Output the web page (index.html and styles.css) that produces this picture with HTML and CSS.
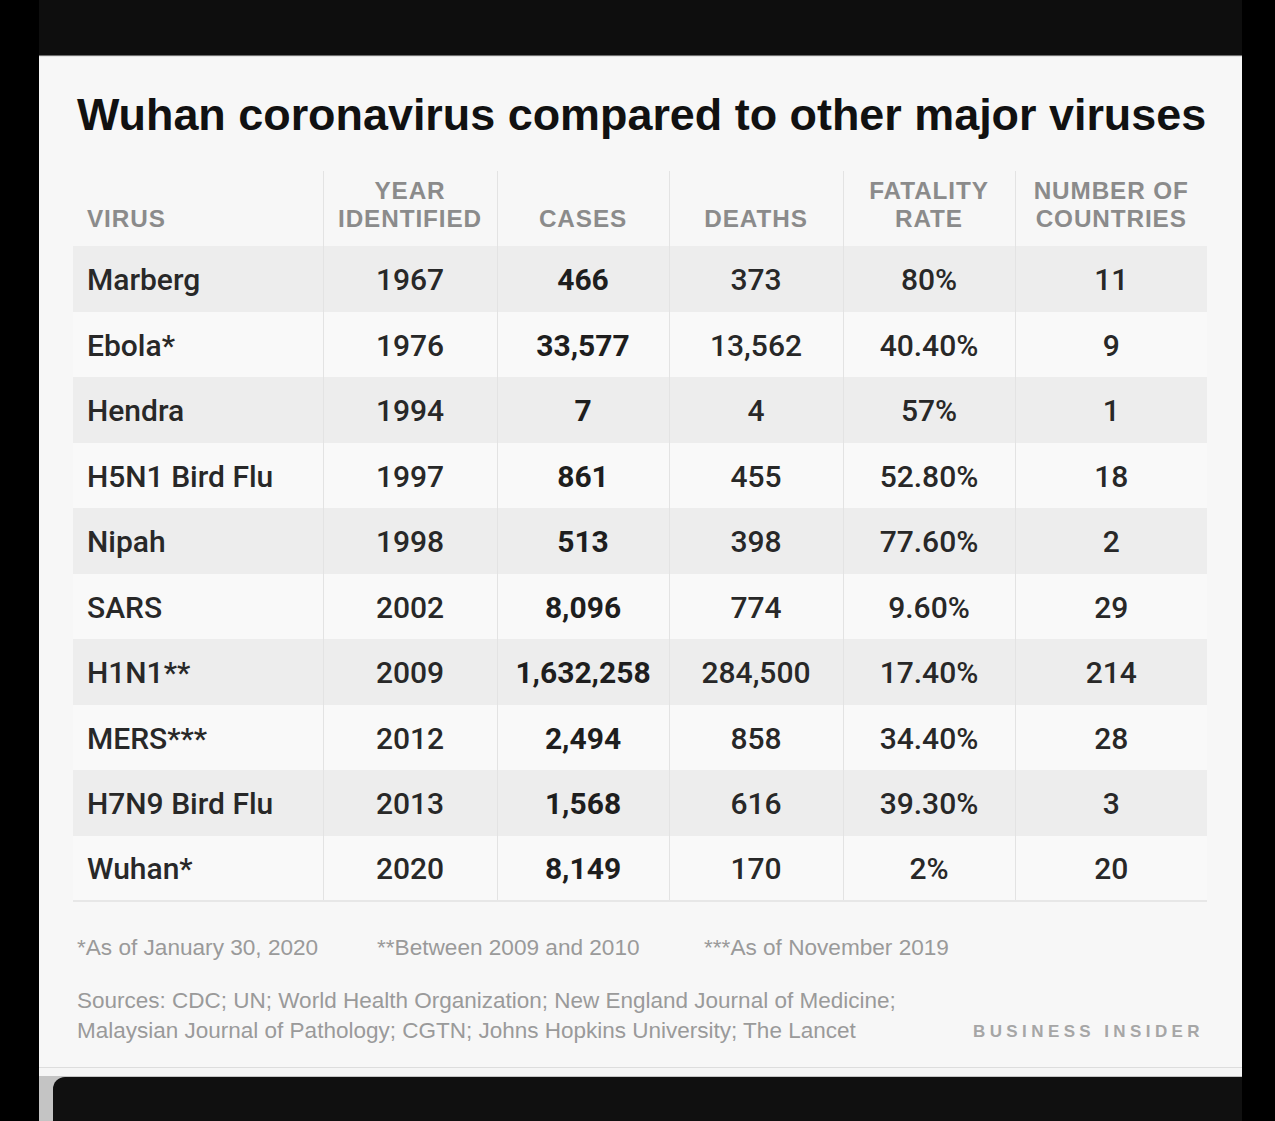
FILE: index.html
```html
<!DOCTYPE html>
<html lang="en">
<head>
<meta charset="utf-8">
<title>Wuhan coronavirus compared to other major viruses</title>
<link rel="stylesheet" href="styles.css">
</head>
<body>
<div class="screen">
  <div class="gutter"></div>
  <div class="column">
    <div class="topbar"></div>
    <div class="panel">
      <h1 class="title">Wuhan coronavirus compared to other major viruses</h1>
      <table class="data">
        <colgroup>
          <col class="w-virus"><col class="w-year"><col class="w-cases"><col class="w-deaths"><col class="w-rate"><col class="w-countries">
        </colgroup>
        <thead>
          <tr>
            <th class="first">VIRUS</th>
            <th>YEAR<br>IDENTIFIED</th>
            <th>CASES</th>
            <th>DEATHS</th>
            <th>FATALITY<br>RATE</th>
            <th>NUMBER OF<br>COUNTRIES</th>
          </tr>
        </thead>
        <tbody>
          <tr class="shade"><td class="first">Marberg</td><td>1967</td><td class="bold">466</td><td>373</td><td>80%</td><td>11</td></tr>
          <tr><td class="first">Ebola*</td><td>1976</td><td class="bold">33,577</td><td>13,562</td><td>40.40%</td><td>9</td></tr>
          <tr class="shade"><td class="first">Hendra</td><td>1994</td><td class="bold">7</td><td>4</td><td>57%</td><td>1</td></tr>
          <tr><td class="first">H5N1 Bird Flu</td><td>1997</td><td class="bold">861</td><td>455</td><td>52.80%</td><td>18</td></tr>
          <tr class="shade"><td class="first">Nipah</td><td>1998</td><td class="bold">513</td><td>398</td><td>77.60%</td><td>2</td></tr>
          <tr><td class="first">SARS</td><td>2002</td><td class="bold">8,096</td><td>774</td><td>9.60%</td><td>29</td></tr>
          <tr class="shade"><td class="first">H1N1**</td><td>2009</td><td class="bold">1,632,258</td><td>284,500</td><td>17.40%</td><td>214</td></tr>
          <tr><td class="first">MERS***</td><td>2012</td><td class="bold">2,494</td><td>858</td><td>34.40%</td><td>28</td></tr>
          <tr class="shade"><td class="first">H7N9 Bird Flu</td><td>2013</td><td class="bold">1,568</td><td>616</td><td>39.30%</td><td>3</td></tr>
          <tr><td class="first">Wuhan*</td><td>2020</td><td class="bold">8,149</td><td>170</td><td>2%</td><td>20</td></tr>
        </tbody>
      </table>
      <div class="notes">
        <span class="note n1">*As of January 30, 2020</span>
        <span class="note n2">**Between 2009 and 2010</span>
        <span class="note n3">***As of November 2019</span>
      </div>
      <div class="foot">
        <p class="sources">Sources: CDC; UN; World Health Organization; New England Journal of Medicine;<br>Malaysian Journal of Pathology; CGTN; Johns Hopkins University; The Lancet</p>
        <div class="brand">BUSINESS INSIDER</div>
      </div>
    </div>
    <div class="panel-edge"></div>
    <div class="bottom"><div class="bottom-dark"></div></div>
  </div>
</div>
</body>
</html>
```

FILE: styles.css
```css
* { box-sizing: border-box; }

html, body {
  margin: 0;
  padding: 0;
  background: #000;
}

.screen {
  width: 1275px;
  height: 1121px;
  overflow: hidden;
  display: flex;
  background: #000;
}

.gutter {
  width: 39px;
  flex: none;
  background: #000;
}

.column {
  width: 1203px;
  flex: none;
  display: flex;
  flex-direction: column;
}

.topbar {
  height: 56px;
  background: #0e0e0e;
  border-bottom: 1px solid #6d6d6d;
}

.panel {
  height: 1011px;
  background: #f7f7f7;
  border-top: 1px solid #e4e4e4;
  padding: 32px 35px 0 34px;
  font-family: "Liberation Sans", Arial, sans-serif;
}

.title {
  margin: 0;
  padding-left: 4px;
  font-family: "Liberation Sans", Arial, sans-serif;
  font-weight: 700;
  font-size: 44.9px;
  line-height: 52px;
  color: #111;
  white-space: nowrap;
}

.data {
  margin-top: 30px;
  width: 1134px;
  border-collapse: collapse;
  table-layout: fixed;
  border-bottom: 2px solid #e7e7e7;
}

.w-virus { width: 250px; }
.w-year { width: 174px; }
.w-cases { width: 172px; }
.w-deaths { width: 174px; }
.w-rate { width: 172px; }
.w-countries { width: 192px; }

.data th {
  height: 75px;
  padding: 0 0 13px;
  vertical-align: bottom;
  text-align: center;
  font-family: "Liberation Sans", Arial, sans-serif;
  font-weight: 700;
  font-size: 24.3px;
  letter-spacing: 0.9px;
  line-height: 28px;
  color: #8b8b8b;
  border-left: 1px solid #e3e3e3;
}

.data td {
  height: 65.5px;
  padding: 2px 0 0;
  vertical-align: middle;
  text-align: center;
  font-family: Roboto, "Liberation Sans", sans-serif;
  font-weight: 500;
  font-size: 30px;
  color: #282828;
  border-left: 1px solid #e3e3e3;
}

.data th.first,
.data td.first {
  text-align: left;
  padding-left: 14px;
  border-left: none;
}

.data td.bold { font-weight: 700; color: #1e1e1e; }

.data tbody tr { background: #f9f9f9; }
.data tbody tr.shade { background: #ededed; }

.notes {
  margin-top: 33px;
  padding-left: 4px;
  display: flex;
  font-size: 22.6px;
  line-height: 26px;
  color: #9a9a9a;
}

.note.n1 { width: 300px; }
.note.n2 { width: 327px; }

.foot {
  margin-top: 25px;
  padding-left: 4px;
  display: flex;
  justify-content: space-between;
  align-items: flex-end;
}

.sources {
  margin: 0;
  font-size: 22.5px;
  line-height: 30px;
  color: #9a9a9a;
}

.brand {
  font-family: "Liberation Sans", Arial, sans-serif;
  font-weight: 700;
  font-size: 17px;
  letter-spacing: 4.4px;
  color: #a6a6a6;
  line-height: 30px;
  margin-right: 3px;
  margin-bottom: -1px;
}

.panel-edge {
  height: 9px;
  background: #f5f5f5;
  border-top: 1px solid #dddddd;
}

.bottom {
  flex: 1;
  background: #c4c4c4;
  padding: 1px 0 0 14px;
}

.bottom-dark {
  height: 100%;
  background: #101010;
  border-top-left-radius: 12px;
}
```
